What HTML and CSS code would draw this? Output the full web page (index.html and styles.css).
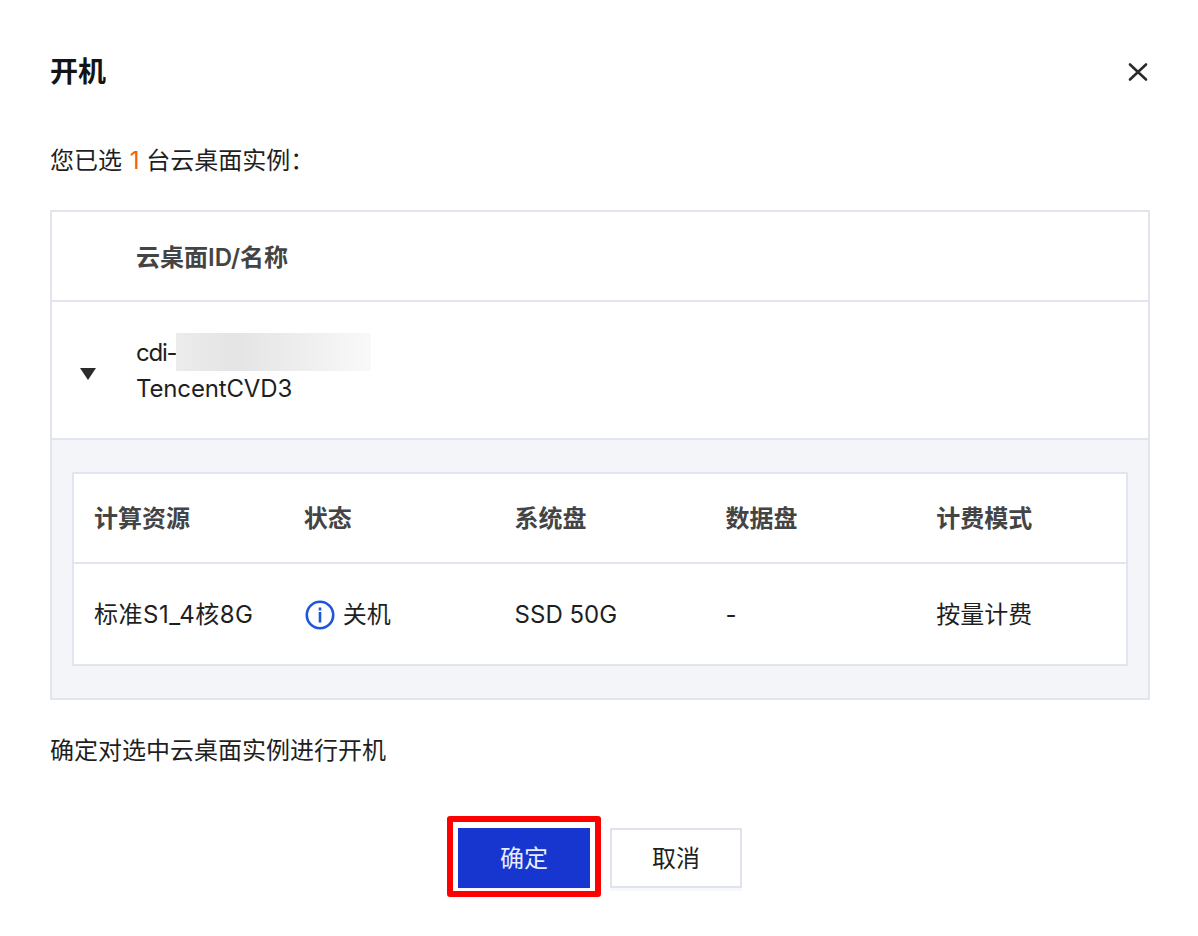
FILE: index.html
```html
<!DOCTYPE html>
<html lang="zh-CN">
<head>
  <meta charset="UTF-8">
  <title>开机</title>
  <link rel="stylesheet" href="styles.css">
</head>
<body>
  <div class="dialog">
    <div class="dialog-header">
      <h3 class="dialog-title">开机</h3>
      <svg class="close-icon" width="20" height="20" viewBox="0 0 20 20">
        <path d="M2 2.5 18 17.5M18 2.5 2 17.5" stroke="#2b2b2b" stroke-width="2.6" stroke-linecap="round" fill="none"/>
      </svg>
    </div>

    <p class="summary">您已选 <span class="count">1</span> 台云桌面实例：</p>

    <div class="outer-table">
      <div class="outer-head">云桌面ID/名称</div>
      <div class="outer-row">
        <span class="caret"></span>
        <div class="instance">
          <div class="instance-id">cdi-<span class="blurred"></span></div>
          <div class="instance-name">TencentCVD3</div>
        </div>
      </div>
      <div class="expanded">
        <table class="inner-table">
          <thead>
            <tr>
              <th>计算资源</th>
              <th>状态</th>
              <th>系统盘</th>
              <th>数据盘</th>
              <th>计费模式</th>
            </tr>
          </thead>
          <tbody>
            <tr>
              <td class="spec">标准S1_4核8G</td>
              <td>
                <span class="status">
                  <svg width="30" height="30" viewBox="0 0 30 30">
                    <circle cx="15" cy="15" r="13.2" stroke="#1f55d8" stroke-width="2.6" fill="none"/>
                    <rect x="13.7" y="7.5" width="2.6" height="3" fill="#1f55d8"/>
                    <rect x="13.7" y="12" width="2.6" height="10.5" fill="#1f55d8"/>
                  </svg>
                  关机
                </span>
              </td>
              <td>SSD 50G</td>
              <td>-</td>
              <td>按量计费</td>
            </tr>
          </tbody>
        </table>
      </div>
    </div>

    <p class="confirm-text">确定对选中云桌面实例进行开机</p>

    <div class="dialog-footer">
      <button class="btn btn-primary">确定</button>
      <button class="btn">取消</button>
    </div>
  </div>
</body>
</html>
```

FILE: styles.css
```css
body {
  margin: 0;
  background: #fff;
  color: #1f1f1f;
  font-family: Inter, "Noto Sans CJK SC", sans-serif;
  font-size: 24px;
}

.dialog {
  box-sizing: border-box;
  width: 1198px;
  height: 936px;
  padding: 0 48px 0 50px;
}

.dialog-header {
  display: flex;
  justify-content: space-between;
  align-items: center;
  height: 144px;
  padding-right: 2px;
}

.dialog-title {
  margin: 0;
  font-size: 28px;
  font-weight: 700;
  line-height: 40px;
  color: #141414;
}

.summary {
  margin: 0;
  height: 66px;
  line-height: 34px;
}

.count {
  margin-left: 1px;
  color: #f2610d;
}

.outer-table {
  border: 2px solid #e2e4ee;
  height: 490px;
  box-sizing: border-box;
}

.outer-head {
  height: 86px;
  padding: 2px 0 0 84px;
  line-height: 88px;
  font-weight: 600;
  color: #444;
  border-bottom: 2px solid #e2e4ee;
}

.outer-row {
  display: flex;
  align-items: center;
  height: 136px;
  border-bottom: 2px solid #e2e4ee;
}

.caret {
  width: 0;
  height: 0;
  margin: 8px 0 0 28px;
  border-left: 8px solid transparent;
  border-right: 8px solid transparent;
  border-top: 12px solid #2b2b2b;
}

.instance {
  margin-left: 40px;
  padding-top: 2px;
  line-height: 36px;
}

.instance-id {
  display: flex;
  align-items: flex-end;
  height: 36px;
  letter-spacing: -1.25px;
}

.instance-name {
  letter-spacing: -0.15px;
}

.blurred {
  flex: none;
  width: 195px;
  height: 38px;
  background: linear-gradient(90deg, #ececec, #e4e4e4 30%, #eeeeee 65%, #f9f9f9);
}

.expanded {
  height: 258px;
  box-sizing: border-box;
  padding: 32px 20px;
  background: #f4f5f9;
}

.inner-table {
  width: 100%;
  table-layout: fixed;
  border-collapse: collapse;
  background: #fff;
  border: 2px solid #e2e4ee;
  line-height: 34px;
}

.inner-table th,
.inner-table td {
  padding: 2px 20px 0;
  text-align: left;
}

.inner-table th {
  height: 86px;
  font-weight: 600;
  color: #444;
  border-bottom: 2px solid #e2e4ee;
}

.inner-table td {
  height: 98px;
}

.inner-table .spec {
  letter-spacing: 0.5px;
}

.status {
  display: flex;
  align-items: center;
  gap: 8px;
  margin-left: 1px;
}

.confirm-text {
  margin: 0;
  height: 116px;
  padding-top: 34px;
  box-sizing: border-box;
  line-height: 34px;
}

.dialog-footer {
  display: flex;
  justify-content: center;
  gap: 20px;
  margin-top: 12px;
}

.btn {
  position: relative;
  width: 132px;
  height: 60px;
  box-sizing: border-box;
  border: 2px solid #e0e3ee;
  background: #fff;
  color: #1f1f1f;
  font: inherit;
  padding: 0 0 4px;
  box-shadow: 0 3px 0 #f7f8fb;
}

.btn-primary {
  border: none;
  background: #1736cf;
  color: #e8edff;
}

/* red highlight round the confirm button */
.btn-primary::after {
  content: "";
  position: absolute;
  inset: -12px -11px -9px -11px;
  border: 6px solid #fe0000;
  border-radius: 3px;
}
```
